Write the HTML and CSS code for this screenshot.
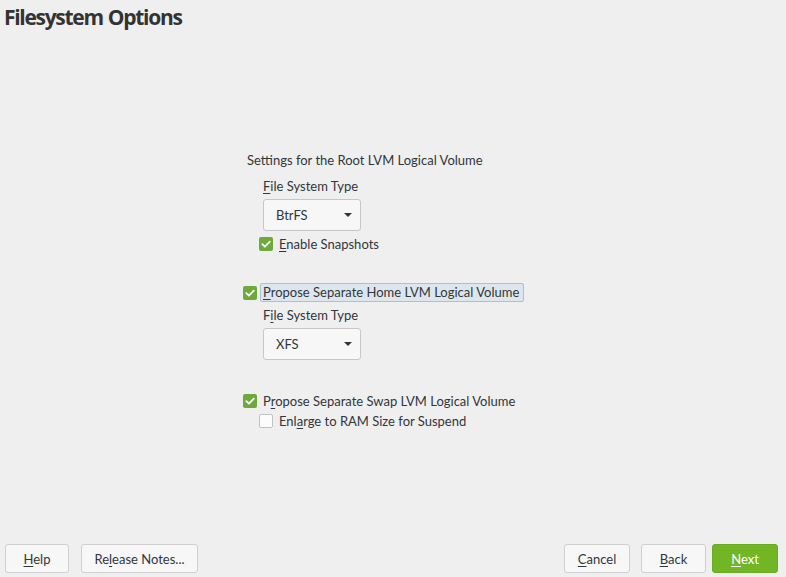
FILE: index.html
```html
<!DOCTYPE html>
<html>
<head>
<meta charset="utf-8">
<link rel="stylesheet" href="styles.css">
</head>
<body>
<div class="page">
  <h1 class="title">Filesystem Options</h1>
  <main class="main">
    <div class="content">
      <div class="heading">Settings for the Root LVM Logical Volume</div>
      <div class="indent">
        <div class="label"><u>F</u>ile System Type</div>
        <div class="combo"><span>BtrFS</span><span class="arrow"></span></div>
      </div>
      <div class="check-row sub row-snap">
        <span class="box checked"><svg viewBox="0 0 14 14" width="14" height="14"><path d="M3.3 7.2 L5.9 9.7 L10.8 4.6" fill="none" stroke="#fff" stroke-width="1.8" stroke-linecap="round" stroke-linejoin="round"/></svg></span>
        <span class="text"><u>E</u>nable Snapshots</span>
      </div>
      <div class="check-row row-home">
        <span class="box checked"><svg viewBox="0 0 14 14" width="14" height="14"><path d="M3.3 7.2 L5.9 9.7 L10.8 4.6" fill="none" stroke="#fff" stroke-width="1.8" stroke-linecap="round" stroke-linejoin="round"/></svg></span>
        <span class="text focus"><u>P</u>ropose Separate Home LVM Logical Volume</span>
      </div>
      <div class="indent">
        <div class="label label2">F<u>i</u>le System Type</div>
        <div class="combo"><span>XFS</span><span class="arrow"></span></div>
      </div>
      <div class="check-row row-swap">
        <span class="box checked"><svg viewBox="0 0 14 14" width="14" height="14"><path d="M3.3 7.2 L5.9 9.7 L10.8 4.6" fill="none" stroke="#fff" stroke-width="1.8" stroke-linecap="round" stroke-linejoin="round"/></svg></span>
        <span class="text">P<u>r</u>opose Separate Swap LVM Logical Volume</span>
      </div>
      <div class="check-row sub row-enlarge">
        <span class="box"></span>
        <span class="text">Enl<u>a</u>rge to RAM Size for Suspend</span>
      </div>
    </div>
  </main>
  <footer class="footer">
    <div class="group">
      <button class="btn btn-help"><u>H</u>elp</button>
      <button class="btn btn-notes">Re<u>l</u>ease Notes...</button>
    </div>
    <div class="group right">
      <button class="btn btn-cancel"><u>C</u>ancel</button>
      <button class="btn btn-back"><u>B</u>ack</button>
      <button class="btn btn-next"><u>N</u>ext</button>
    </div>
  </footer>
</div>
</body>
</html>
```

FILE: styles.css
```css
* { box-sizing: border-box; }
html, body {
  margin: 0;
  padding: 0;
  background: #efefef;
}
body {
  font-family: "Lato", "Liberation Sans", sans-serif;
  font-size: 13px;
  color: #31363b;
}
u { text-decoration-thickness: 1px; text-underline-offset: 2px; }
.page {
  width: 786px;
  height: 577px;
  display: flex;
  flex-direction: column;
}
.title {
  margin: 0;
  padding: 2px 0 0 4px;
  height: 40px;
  font-family: "Open Sans", sans-serif;
  font-size: 21px;
  font-weight: 700;
  letter-spacing: -1.3px;
  word-spacing: 1px;
  line-height: 30px;
  color: #333;
}
.main {
  flex: 1;
  display: flex;
  padding-left: 243px;
  padding-top: 112px;
}
.content {
  width: 300px;
  display: flex;
  flex-direction: column;
}
.heading {
  padding-left: 4px;
  line-height: 16px;
  height: 16px;
}
.indent {
  padding-left: 20px;
}
.label {
  margin-top: 10px;
  line-height: 16px;
  height: 16px;
}
.label2 { margin-top: 5px; }
.combo {
  margin-top: 5px;
  width: 98px;
  height: 32px;
  background: #f7f7f7;
  border: 1px solid #c6c6c6;
  border-radius: 3px;
  display: flex;
  align-items: center;
  justify-content: space-between;
  padding: 0 8px 0 12px;
}
.arrow {
  width: 0;
  height: 0;
  border-left: 4px solid transparent;
  border-right: 4px solid transparent;
  border-top: 4px solid #31363b;
}
.check-row {
  display: flex;
  align-items: center;
  height: 16px;
  line-height: 16px;
}
.check-row.sub { padding-left: 16px; }
.row-snap { margin-top: 5px; }
.row-home { margin-top: 31px; height: 19px; }
.row-swap { margin-top: 33px; }
.row-enlarge { margin-top: 4px; }
.box {
  width: 14px;
  height: 14px;
  border-radius: 2px;
  background: #fcfcfc;
  border: 1px solid #c2c2c2;
  flex: none;
  display: flex;
  align-items: center;
  justify-content: center;
}
.box.checked {
  background: #6eaa3a;
  border: none;
}
.box svg { display: block; }
.text { margin-left: 6px; }
.focus {
  margin-left: 3px;
  padding: 0 4px 0 2px;
  height: 19px;
  line-height: 17px;
  background: #dee6ed;
  border: 1px solid #aac0d4;
  border-radius: 2px;
}
.footer {
  height: 37px;
  display: flex;
  justify-content: space-between;
  padding: 4px 8px 4px 5px;
}
.group { display: flex; gap: 12px; }
.group.right { gap: 11px; }
.btn {
  font-family: "Lato", "Liberation Sans", sans-serif;
  font-size: 13px;
  color: #31363b;
  height: 29px;
  background: #f7f7f7;
  border: 1px solid #cfcfcf;
  border-radius: 3px;
  padding: 0;
}
.btn-help { width: 64px; }
.btn-notes { width: 117px; }
.btn-cancel { width: 66px; }
.btn-back { width: 65px; }
.btn-next {
  width: 66px;
  margin-left: -5px;
  background: #72b626;
  border-color: #6aad22;
  color: #fff;
}
```
